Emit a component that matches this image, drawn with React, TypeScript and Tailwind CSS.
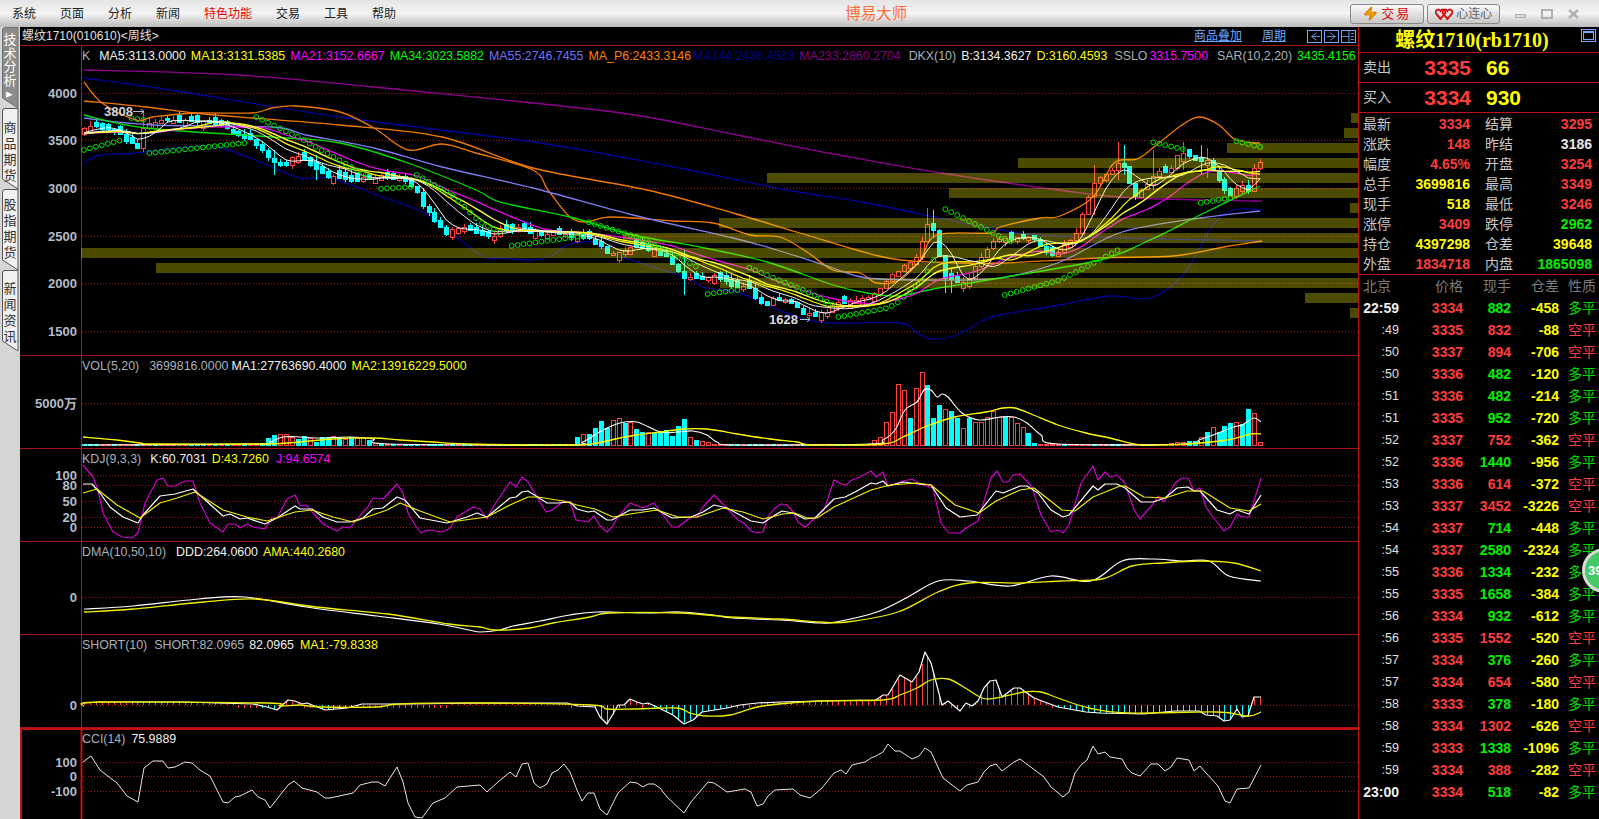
import React from "react";
import { Zap } from "lucide-react";

type Pt = [number, number];

const parse = (s: string): Pt[] =>
  s.trim().split(/\s+/).map((p) => {
    const [x, y] = p.split(",").map(Number);
    return [x, y] as Pt;
  });

const interp = (pts: Pt[], x: number) => {
  if (x <= pts[0][0]) return pts[0][1];
  for (let i = 1; i < pts.length; i++) {
    if (x <= pts[i][0]) {
      const [x0, y0] = pts[i - 1];
      const [x1, y1] = pts[i];
      return y0 + ((y1 - y0) * (x - x0)) / (x1 - x0);
    }
  }
  return pts[pts.length - 1][1];
};

// catmull-rom through the key points, for the slow moving averages
const smoothPath = (s: string) => {
  const p = parse(s);
  let d = `M${p[0][0]} ${p[0][1]}`;
  for (let i = 0; i < p.length - 1; i++) {
    const a = p[Math.max(i - 1, 0)];
    const b = p[i];
    const c = p[i + 1];
    const e = p[Math.min(i + 2, p.length - 1)];
    const c1x = b[0] + (c[0] - a[0]) / 6;
    const c1y = b[1] + (c[1] - a[1]) / 6;
    const c2x = c[0] - (e[0] - b[0]) / 6;
    const c2y = c[1] - (e[1] - b[1]) / 6;
    d += `C${c1x.toFixed(1)} ${c1y.toFixed(1)} ${c2x.toFixed(1)} ${c2y.toFixed(1)} ${c[0]} ${c[1]}`;
  }
  return d;
};

// pseudo random so the candles stay the same on every render
const rnd = (i: number) => {
  const v = Math.sin(i * 12.9898 + 4.1) * 43758.5453;
  return v - Math.floor(v);
};

const N = 199;
const xs = Array.from({ length: N }, (_, i) => 84 + 5.94 * i);

const PRICE = parse(`84,128 95,125 110,130 125,138 140,148 144,125 160,120 200,122 215,125 235,132 250,140 265,153 272,162 283,167 295,155 305,160 325,175 345,180 370,178 385,176 400,178 415,190 423,205 444,233 460,225 490,238 500,230 520,228 533,232 577,235 600,245 607,255 617,252 637,245 653,250 667,258 683,277 700,278 717,277 727,283 750,288 757,303 767,305 773,297 793,303 803,313 813,315 823,312 833,305 850,302 870,297 882,285 893,273 907,265 918,257 925,225 930,227 937,233 942,278 948,278 960,282 970,277 983,252 997,237 1005,240 1030,235 1050,255 1060,250 1075,235 1085,205 1092,187 1104,172 1110,173 1116,163 1122,162 1128,180 1134,197 1146,187 1152,177 1158,170 1164,173 1170,172 1176,158 1182,153 1194,162 1200,162 1206,160 1218,177 1224,190 1230,197 1236,190 1242,183 1248,192 1254,167 1260,160`);

const closes = xs.map((x, i) => interp(PRICE, x) + (rnd(i) - 0.5) * 4);

const movingAvg = (n: number) =>
  closes
    .map((_, i) => {
      let sum = 0;
      for (let k = i - n + 1; k <= i; k++) sum += k < 0 ? 134 : closes[k];
      return `${xs[i].toFixed(1)},${(sum / n).toFixed(1)}`;
    })
    .join(" ");

const longWicks: Record<number, [number, number]> = {
  144: [112, 152], 196: [114, 128], 272: [150, 175], 316: [155, 180],
  683: [250, 295], 925: [208, 240], 931: [210, 238], 943: [268, 293], 949: [268, 293],
  1092: [165, 215], 1116: [142, 180], 1122: [145, 175], 1152: [150, 190], 1182: [142, 170], 1200: [145, 175], 1206: [148, 178],
};

const MA233 = "84,70 238,75 374,87 533,103 635,115 737,135 839,155 941,173 1066,191 1134,198 1262,201";
const MA144 = "84,78 170,90 340,117 533,142 669,166 787,190 867,203 990,228 1060,236 1262,241";
const LOW_BAND = "84,163 100,155 136,153 187,147 218,147 260,162 300,178 330,178 377,195 428,215 480,255 500,258 533,260 553,255 567,245 593,242 610,253 685,277 703,287 740,293 767,305 800,318 833,323 900,323 917,333 933,339 957,335 980,322 1000,315 1060,305 1110,296 1150,298 1183,275 1213,225 1234,210 1262,210";
const MA_P6 = "84,101 146,107 194,113 252,118 340,125 442,137 533,168 647,190 733,213 800,233 883,257 933,262 1000,263 1100,258 1173,256 1224,247 1262,241";
const THIN_ORANGE = "84,82 102,103 136,120 153,117 194,113 252,113 272,108 296,106 340,112 374,128 408,150 442,144 476,153 533,170 548,190 570,217 587,222 610,217 673,221 713,223 750,235 780,237 807,252 833,270 860,273 877,283 900,280 920,260 937,235 990,233 1000,227 1040,218 1060,216 1093,197 1114,163 1137,159 1154,147 1182,125 1200,117 1219,125 1236,140 1260,143";
const MA55 = "84,118 153,125 272,127 306,135 374,148 442,167 533,188 633,215 733,238 777,250 833,268 867,278 933,280 1000,278 1060,262 1122,232 1200,218 1260,211";
const MA34 = "84,115 146,128 272,137 340,143 408,163 476,190 500,202 570,217 633,235 700,247 767,262 833,285 867,293 900,296 933,289 1000,278 1100,260 1150,240 1200,215 1260,186";

const SAR_SEGS = [
  "84,150 122,140", "130,118 144,120", "150,153 245,143", "252,115 300,138 360,172 372,178", "378,189 410,187",
  "415,174 452,195 480,222 500,232", "510,246 582,236", "588,222 640,238 697,267", "708,294 738,290",
  "745,266 810,293 833,305", "839,317 888,308 897,303 913,289 925,278 930,265 937,255", "943,208 1003,238 1015,243",
  "1005,295 1060,280 1090,265 1118,250", "1152,142 1182,149", "1200,203 1230,198", "1236,141 1260,147",
].map(parse);

const BANDS: [number, number][] = [
  [113, 1351], [128, 1344], [143, 1227], [158, 1018], [173, 767], [188, 949], [203, 1350], [218, 719],
  [233, 623], [248, 81], [263, 156], [278, 720], [293, 1305], [308, 1350],
];

type VolBar = [number, number, "c" | "r"];
const VOL: VolBar[] = [
  [265, 443, "c"], [271, 438, "c"], [277, 435, "c"], [283, 434, "r"], [289, 437, "r"], [295, 439, "c"], [301, 436, "c"], [307, 438, "r"], [313, 442, "c"], [319, 437, "c"], [325, 437, "c"], [331, 436, "r"], [337, 437, "c"], [343, 439, "r"], [349, 437, "c"], [355, 438, "r"], [361, 438, "r"], [367, 440, "c"], [373, 443, "r"], [379, 444, "c"],
  [577, 437, "c"], [583, 434, "r"], [589, 434, "c"], [595, 428, "c"], [601, 421, "c"], [607, 428, "c"], [613, 420, "r"], [619, 418, "r"], [625, 423, "c"], [631, 422, "r"], [637, 429, "c"], [643, 432, "c"], [649, 432, "r"], [655, 433, "c"], [661, 432, "c"], [667, 430, "c"], [673, 436, "c"], [679, 426, "c"], [685, 419, "c"], [691, 437, "r"], [697, 440, "c"], [703, 441, "r"], [709, 442, "r"], [715, 444, "r"],
  [876, 440, "r"], [882, 437, "r"], [888, 422, "r"], [894, 412, "r"], [900, 384, "r"], [906, 390, "r"], [912, 418, "c"], [918, 388, "r"], [924, 372, "r"], [930, 385, "c"], [936, 418, "c"], [942, 405, "c"], [948, 409, "r"], [954, 411, "c"], [960, 418, "c"], [966, 428, "r"], [972, 418, "c"], [978, 422, "r"], [984, 417, "r"], [990, 411, "r"], [996, 417, "r"], [1002, 417, "c"], [1008, 417, "r"], [1014, 423, "r"], [1020, 427, "r"], [1026, 433, "c"], [1032, 443, "c"],
  [1170, 443, "r"], [1176, 442, "r"], [1182, 442, "r"], [1188, 441, "c"], [1194, 441, "c"], [1200, 437, "r"], [1206, 432, "c"], [1212, 427, "r"], [1218, 432, "c"], [1224, 426, "c"], [1230, 423, "c"], [1236, 422, "r"], [1242, 424, "c"], [1248, 409, "c"], [1254, 413, "r"], [1260, 442, "r"],
];

const VOL_W = "84,445 257,444 270,442 283,437 300,437 320,438 350,437 373,439 390,444 570,445 583,442 603,430 620,423 637,422 660,432 677,432 693,431 707,435 717,442 737,445 869,444 883,440 895,430 905,410 917,402 924,390 931,390 937,397 942,394 948,397 962,413 979,420 1000,417 1014,417 1027,423 1041,435 1058,444 1186,444 1199,440 1213,435 1234,427 1242,425 1254,418 1261,422";
const VOL_Y = "83,437 117,440 140,443 157,444 260,444 287,443 333,439 373,438 400,440 433,442 467,444 573,445 597,443 620,438 637,435 660,432 683,429 707,429 737,434 770,439 797,442 813,445 883,444 903,437 927,426 955,417 986,412 1003,408 1015,408 1031,414 1058,425 1086,433 1110,438 1141,445 1186,444 1227,440 1251,434 1261,434";

const KDJ_J = "83,465 93,477 98,490 103,513 113,532 122,537 132,538 138,533 145,503 157,480 163,478 168,486 175,486 185,481 193,481 200,503 210,523 223,532 228,524 235,524 240,528 247,524 253,527 265,529 272,518 277,518 287,499 295,495 300,506 306,505 315,515 323,524 337,531 343,527 350,528 362,513 367,508 373,498 383,499 397,484 403,493 408,513 415,525 421,533 427,530 443,532 450,528 457,517 473,507 480,509 487,519 493,507 510,482 516,487 522,477 528,482 546,512 552,510 564,501 570,502 576,520 588,522 594,516 600,526 607,532 612,527 618,517 630,503 643,508 654,503 672,527 678,527 691,517 697,517 703,507 714,495 727,508 738,520 745,524 751,531 757,533 763,532 768,517 775,508 781,504 787,505 793,512 798,522 805,527 815,518 824,510 834,480 841,484 846,485 852,480 860,477 871,471 876,477 883,472 888,486 900,482 912,479 920,484 933,488 941,523 949,533 960,533 966,528 978,521 991,478 997,471 1003,482 1008,482 1013,475 1020,474 1032,487 1041,515 1051,532 1058,530 1063,533 1069,525 1081,483 1093,466 1098,480 1105,472 1110,477 1117,475 1125,483 1134,510 1140,519 1153,504 1158,496 1164,502 1175,483 1182,478 1188,478 1194,491 1200,488 1206,507 1213,517 1224,531 1230,527 1237,514 1242,517 1249,517 1261,478";
const KDJ_K = "83,484 92,484 100,493 110,507 123,517 138,523 143,515 160,496 175,494 193,489 213,507 223,516 230,514 240,519 247,518 265,524 277,518 295,506 300,509 312,509 323,517 337,522 350,522 363,518 373,509 383,508 397,497 405,500 420,518 447,523 467,517 477,513 487,517 510,498 516,497 522,492 528,491 547,503 558,503 570,502 577,509 588,512 594,511 607,520 612,520 630,510 643,510 654,508 672,518 691,517 703,512 714,505 727,508 751,521 763,523 775,515 782,511 793,513 805,519 815,518 834,499 845,497 855,492 871,483 876,484 883,481 888,486 903,482 919,484 931,485 946,508 960,517 977,515 996,491 1003,493 1020,486 1027,486 1038,493 1051,510 1063,517 1069,515 1093,486 1098,490 1105,484 1117,484 1125,488 1141,502 1153,502 1165,498 1177,488 1188,487 1194,491 1200,491 1217,510 1230,514 1237,510 1249,514 1261,495";
const KDJ_D = "83,493 97,489 117,505 140,518 160,503 177,498 195,492 223,510 247,517 267,521 295,512 312,510 333,517 353,522 387,510 400,503 420,511 450,522 487,517 510,505 528,497 538,497 563,501 577,505 595,509 613,517 630,514 657,510 678,517 697,517 723,508 743,512 763,519 783,514 795,513 807,518 817,518 834,507 871,490 890,485 917,483 931,485 955,505 979,513 996,501 1020,490 1034,488 1062,510 1075,511 1093,497 1120,486 1125,486 1144,497 1165,498 1187,491 1203,491 1230,508 1249,511 1261,504";

const DMA_W = "84,609 133,606 199,599 245,597 306,607 377,616 439,624 469,630 480,632 500,630 513,626 540,621 570,615 597,612 647,613 680,612 713,615 733,618 780,620 820,623 836,622 877,612 908,597 938,581 969,581 1010,586 1051,576 1091,581 1122,561 1153,559 1183,561 1209,561 1229,576 1261,581";
const DMA_Y = "84,612 133,609 204,602 255,599 316,607 388,614 449,624 480,627 495,630 530,628 553,623 590,617 610,613 680,613 730,617 780,619 820,622 847,622 898,612 938,592 969,583 1020,583 1061,581 1102,579 1132,566 1163,563 1199,561 1234,563 1261,571";

const SHORT_W = "83,703 100,702 183,702 253,704 267,707 277,710 288,700 295,701 302,704 307,703 325,710 347,708 362,704 413,704 480,703 567,703 577,706 595,707 600,717 607,724 613,714 618,705 624,705 630,699 637,702 643,704 648,703 657,707 673,715 684,724 693,720 702,712 727,708 740,705 757,703 780,702 820,701 876,700 883,695 888,695 900,675 912,682 919,672 925,652 931,663 936,682 942,705 948,701 960,711 966,703 972,706 978,701 984,688 990,681 996,680 1002,697 1014,688 1020,688 1034,698 1058,707 1086,712 1100,713 1144,714 1175,711 1199,711 1206,715 1217,716 1224,721 1230,720 1237,709 1242,717 1248,716 1254,697 1261,697";
const SHORT_Y = "83,706 100,702 267,703 280,706 300,705 320,707 377,707 400,704 480,703 590,705 607,709 633,709 677,708 690,713 707,716 730,715 763,706 820,701 883,700 900,695 917,688 931,680 948,679 962,686 982,698 996,698 1024,692 1041,692 1058,698 1089,708 1127,713 1217,712 1248,716 1261,712";

const CCI = "83,762 91,756 100,770 117,783 127,796 138,802 144,768 153,761 163,761 168,768 175,767 185,762 192,763 200,770 210,776 223,802 228,803 235,797 240,796 252,790 258,797 265,800 270,808 288,785 294,781 302,788 317,792 325,798 330,798 353,793 360,785 372,782 378,782 385,786 390,778 397,767 403,782 408,803 415,817 422,818 433,803 445,798 457,787 480,785 487,792 498,782 510,772 516,777 522,764 528,763 534,783 540,788 547,784 552,773 558,770 564,764 570,772 577,790 582,801 588,793 594,793 600,809 607,815 618,793 630,782 637,783 643,787 648,784 654,784 660,788 667,797 684,813 691,802 708,782 714,783 720,787 727,792 745,789 751,792 757,806 763,804 768,796 775,790 793,789 800,795 810,798 822,788 834,773 841,770 846,774 852,765 865,762 871,758 876,756 883,752 888,744 895,751 900,751 912,759 919,756 925,748 931,752 943,778 960,791 967,785 978,782 984,772 990,766 996,764 1002,771 1014,762 1020,759 1032,768 1044,777 1051,787 1063,797 1069,792 1075,773 1081,765 1087,760 1093,746 1098,754 1105,752 1110,757 1122,759 1127,768 1132,773 1140,776 1151,764 1158,764 1165,771 1171,767 1177,758 1189,760 1194,771 1200,766 1206,773 1218,786 1225,801 1230,803 1237,789 1249,788 1261,765";

const RED_GRID = "#a81414";

const Line = ({ pts, c, w = 1.2 }: { pts: string; c: string; w?: number }) => (
  <polyline points={pts} fill="none" stroke={c} strokeWidth={w} strokeLinejoin="round" />
);

const Curve = ({ pts, c, w = 1.3 }: { pts: string; c: string; w?: number }) => (
  <path d={smoothPath(pts)} fill="none" stroke={c} strokeWidth={w} strokeLinejoin="round" />
);

const Grid = ({ ys }: { ys: number[] }) => (
  <>
    {ys.map((y) => (
      <line key={y} x1={82} x2={1358} y1={y + 0.5} y2={y + 0.5} stroke={RED_GRID} strokeDasharray="1 2" />
    ))}
  </>
);

const AxisLabels = ({ items }: { items: [string, number][] }) => (
  <>
    {items.map(([t, y]) => (
      <text key={t} x={77} y={y + 5} textAnchor="end" fill="#b4bcc8" fontSize={13} fontWeight={700}>
        {t}
      </text>
    ))}
  </>
);

type Legend = [string, string][];

const GRAY = "text-[#a8b2bc]";
const WHITE = "text-[#f0f0f0]";
const YEL = "text-[#ffff00]";
const MAG = "text-[#ff00ff]";
const GRN = "text-[#00ff00]";

function Pane({
  top,
  height,
  legend,
  active,
  children,
}: {
  top: number;
  height: number;
  legend: Legend;
  active?: boolean;
  children: React.ReactNode;
}) {
  return (
    <div className={active ? "relative border-l-2 border-t-2 border-[#c01010]" : "relative border-b border-[#a81414]"}>
      <svg width={1338} height={height} viewBox={`${active ? 22 : 20} ${top} 1338 ${height}`} className="block">
        <line x1={81.5} x2={81.5} y1={top} y2={top + height} stroke="#c01010" strokeWidth={active ? 2 : 1} />
        {children}
      </svg>
      <div
        className={`absolute flex gap-[5px] text-[12.4px] leading-[18px] whitespace-nowrap ${active ? "top-0 left-[60px]" : "top-[1px] left-[62px]"}`}
      >
        {legend.map(([t, c]) => (
          <span key={t} className={c}>
            {t}
          </span>
        ))}
      </div>
    </div>
  );
}

function Candles() {
  return (
    <g shapeRendering="crispEdges">
      {xs.map((x, i) => {
        const close = closes[i];
        const prev = i === 0 ? close + 3 : closes[i - 1];
        const up = prev > close;
        const body = Math.max(Math.abs(prev - close), 2 + rnd(i + 300) * 6);
        const top = up ? close : close - body;
        const bottom = up ? close + body : close;
        const cx = Math.round(x);
        const lw = Object.entries(longWicks).find(([k]) => Math.abs(Number(k) - x) < 3);
        const wTop = lw ? lw[1][0] : top - rnd(i + 50) * 5;
        const wBot = lw ? lw[1][1] : bottom + rnd(i + 90) * 4;
        const col = up ? "#ff4040" : "#00ffff";
        return (
          <g key={i}>
            <line x1={cx + 0.5} x2={cx + 0.5} y1={wTop} y2={wBot} stroke={col} />
            {up ? (
              <rect x={cx - 2 + 0.5} y={Math.round(top) + 0.5} width={4} height={Math.round(bottom - top)} fill="#000" stroke={col} />
            ) : (
              <rect x={cx - 2} y={Math.round(top)} width={5} height={Math.round(bottom - top) + 1} fill={col} />
            )}
          </g>
        );
      })}
    </g>
  );
}

function SarDots() {
  return (
    <g>
      {SAR_SEGS.flatMap((seg, s) =>
        xs
          .filter((x) => x >= seg[0][0] - 1 && x <= seg[seg.length - 1][0] + 1)
          .map((x) => <circle key={`${s}-${x}`} cx={x} cy={interp(seg, x)} r={2.4} fill="none" stroke="#00e800" />),
      )}
    </g>
  );
}

function VolumeBars() {
  const bars = xs.map((x, i) => {
    const hit = VOL.find((v) => Math.abs(v[0] - x) < 3);
    return hit ? { x, top: hit[1], kind: hit[2] } : { x, top: 444, kind: rnd(i + 7) > 0.5 ? ("c" as const) : ("r" as const) };
  });
  return (
    <g shapeRendering="crispEdges">
      {bars.map((b, i) => {
        const cx = Math.round(b.x);
        return b.kind === "c" ? (
          <rect key={i} x={cx - 2} y={b.top} width={5} height={446 - b.top} fill="#00ffff" />
        ) : (
          <rect key={i} x={cx - 2 + 0.5} y={b.top + 0.5} width={4} height={445 - b.top} fill="#000" stroke="#ff4040" />
        );
      })}
    </g>
  );
}

function ShortSticks() {
  const white = parse(SHORT_W);
  return (
    <g shapeRendering="crispEdges">
      {xs.map((x, i) => {
        const y = interp(white, x);
        const cx = Math.round(x) + 0.5;
        return <line key={i} x1={cx} x2={cx} y1={705} y2={y < 703.5 ? y : y > 706 ? y : 708} stroke={y < 705 ? "#ff4040" : "#00ffff"} />;
      })}
    </g>
  );
}

const MA_5 = movingAvg(5);
const MA_10 = movingAvg(10);
const MA_13 = movingAvg(13);
const MA_21 = movingAvg(21);
const MA_16 = movingAvg(16);

function Charts() {
  return (
    <div className="flex flex-col bg-black">
      <Pane
        top={46}
        height={309}
        legend={[
          [`K`, `${GRAY} mr-[4px]`],
          ["MA5:3113.0000", WHITE],
          ["MA13:3131.5385", YEL],
          ["MA21:3152.6667", MAG],
          ["MA34:3023.5882", GRN],
          ["MA55:2746.7455", "text-[#7070ff]"],
          ["MA_P6:2433.3146", "text-[#ff8000]"],
          ["MA144:2436.4583", "text-[#000090] ml-[-3px]"],
          ["MA233:2860.2704", "text-[#800080]"],
          ["DKX(10)", `${GRAY} ml-[3px]`],
          ["B:3134.3627", WHITE],
          ["D:3160.4593", YEL],
          ["SSLO", `${GRAY} ml-[2px]`],
          ["3315.7500", `${MAG} ml-[-3px]`],
          ["SAR(10,2,20)", `${GRAY} ml-[4px]`],
          ["3435.4156", GRN],
        ]}
      >
        <Grid ys={[93, 140, 188, 236, 283, 331]} />
        <AxisLabels items={[["4000", 93], ["3500", 140], ["3000", 188], ["2500", 236], ["2000", 283], ["1500", 331]]} />
        <Curve pts={MA233} c="#900090" />
        <Curve pts={MA144} c="#000098" />
        <Curve pts={LOW_BAND} c="#000098" />
        <Candles />
        <Curve pts={MA_P6} c="#f07800" />
        <Curve pts={THIN_ORANGE} c="#f07800" />
        <Curve pts={MA55} c="#7c7cf0" />
        <Curve pts={MA34} c="#00e000" />
        <Line pts={MA_21} c="#ff00ff" />
        <Line pts={MA_16} c="#ffff40" w={1.4} />
        <Line pts={MA_13} c="#ffff00" />
        <Line pts={MA_10} c="#f0f0f0" w={1} />
        <Line pts={MA_5} c="#ffffff" w={1} />
        <SarDots />
        {BANDS.map(([y, x]) => (
          <rect key={y} x={x} y={y} width={1358 - x} height={10} fill="#fff700" fillOpacity={0.3} />
        ))}
        <text x={104} y={116} fill="#d0d4dc" fontSize={13} fontWeight={700}>
          3808
        </text>
        <path d="M133 111.5h11M141 109l3 2.5-3 2.5" stroke="#b4bcc8" fill="none" />
        <text x={769} y={324} fill="#d8dce4" fontSize={13} fontWeight={700}>
          1628
        </text>
        <path d="M800 319.5h10M807 317l3 2.5-3 2.5" stroke="#b4bcc8" fill="none" />
      </Pane>

      <Pane
        top={356}
        height={92}
        legend={[
          ["VOL(5,20)", `${GRAY} mr-[5px]`],
          ["3699816.0000", `${GRAY} mr-[-2px]`],
          ["MA1:27763690.4000", WHITE],
          ["MA2:13916229.5000", YEL],
        ]}
      >
        <Grid ys={[403]} />
        <AxisLabels items={[["5000万", 403]]} />
        <VolumeBars />
        <Curve pts={VOL_W} c="#ffffff" w={1.1} />
        <Curve pts={VOL_Y} c="#ffff00" />
      </Pane>

      <Pane
        top={449}
        height={92}
        legend={[
          ["KDJ(9,3,3)", `${GRAY} mr-[4px]`],
          ["K:60.7031", WHITE],
          ["D:43.7260", `${YEL} mr-[2px]`],
          ["J:94.6574", MAG],
        ]}
      >
        <Grid ys={[475, 485, 501, 517, 527]} />
        <AxisLabels items={[["100", 475], ["80", 485], ["50", 501], ["20", 517], ["0", 527]]} />
        <Line pts={KDJ_J} c="#d000d0" />
        <Line pts={KDJ_K} c="#ffffff" />
        <Line pts={KDJ_D} c="#f0f000" />
      </Pane>

      <Pane
        top={542}
        height={92}
        legend={[
          ["DMA(10,50,10)", `${GRAY} mr-[5px]`],
          ["DDD:264.0600", WHITE],
          ["AMA:440.2680", YEL],
        ]}
      >
        <Grid ys={[597]} />
        <AxisLabels items={[["0", 597]]} />
        <Curve pts={DMA_W} c="#ffffff" w={1.2} />
        <Curve pts={DMA_Y} c="#f0f000" />
      </Pane>

      <Pane
        top={635}
        height={92}
        legend={[
          ["SHORT(10)", `${GRAY} mr-[2px]`],
          ["SHORT:82.0965", GRAY],
          ["82.0965", `${WHITE} mr-[1px]`],
          ["MA1:-79.8338", YEL],
        ]}
      >
        <Grid ys={[705]} />
        <AxisLabels items={[["0", 705]]} />
        <ShortSticks />
        <Line pts={SHORT_W} c="#ffffff" />
        <Curve pts={SHORT_Y} c="#f0f000" />
      </Pane>

      <Pane
        active
        top={730}
        height={89}
        legend={[
          ["CCI(14)", `${GRAY} mr-[1px]`],
          ["75.9889", WHITE],
        ]}
      >
        <Grid ys={[762, 776, 791]} />
        <AxisLabels items={[["100", 762], ["0", 776], ["-100", 791]]} />
        <Line pts={CCI} c="#e8e8e8" w={1} />
      </Pane>
    </div>
  );
}

const STATS: [string, string, string, string, string, string][] = [
  ["最新", "3334", "r", "结算", "3295", "r"],
  ["涨跌", "148", "r", "昨结", "3186", "w"],
  ["幅度", "4.65%", "r", "开盘", "3254", "r"],
  ["总手", "3699816", "y", "最高", "3349", "r"],
  ["现手", "518", "y", "最低", "3246", "r"],
  ["涨停", "3409", "r", "跌停", "2962", "g"],
  ["持仓", "4397298", "y", "仓差", "39648", "y"],
  ["外盘", "1834718", "r", "内盘", "1865098", "g"],
];

const COLOR: Record<string, string> = {
  r: "text-[#ff3c3c]",
  y: "text-[#ffff00]",
  g: "text-[#00f000]",
  w: "text-[#e8e8e8]",
};

const TICKS: [string, string, string, "g" | "r", string][] = [
  ["22:59", "3334", "882", "g", "-458"],
  [":49", "3335", "832", "r", "-88"],
  [":50", "3337", "894", "r", "-706"],
  [":50", "3336", "482", "g", "-120"],
  [":51", "3336", "482", "g", "-214"],
  [":51", "3335", "952", "g", "-720"],
  [":52", "3337", "752", "r", "-362"],
  [":52", "3336", "1440", "g", "-956"],
  [":53", "3336", "614", "r", "-372"],
  [":53", "3337", "3452", "r", "-3226"],
  [":54", "3337", "714", "g", "-448"],
  [":54", "3337", "2580", "g", "-2324"],
  [":55", "3336", "1334", "g", "-232"],
  [":55", "3335", "1658", "g", "-384"],
  [":56", "3334", "932", "g", "-612"],
  [":56", "3335", "1552", "r", "-520"],
  [":57", "3334", "376", "g", "-260"],
  [":57", "3334", "654", "r", "-580"],
  [":58", "3333", "378", "g", "-180"],
  [":58", "3334", "1302", "r", "-626"],
  [":59", "3333", "1338", "g", "-1096"],
  [":59", "3334", "388", "r", "-282"],
  ["23:00", "3334", "518", "g", "-82"],
];

const ROW_COLS = "grid grid-cols-[39px_64px_48px_48px_1fr] items-center h-[22px] pl-[1px]";

function QuotePanel() {
  return (
    <div className="relative w-[241px] h-[792px] overflow-hidden border-l border-[#c01010] bg-black text-[14px] text-[#c8c8c8]">
      <div className="relative flex h-[26px] items-center justify-center border-b border-[#c01010] pr-[14px] font-['Liberation_Serif','Noto_Sans_CJK_SC',serif] text-[20px] font-bold text-[#ffff00]">
        螺纹1710(rb1710)
        <div className="absolute right-[3px] top-[2px] flex h-[13px] w-[15px] items-center justify-center border border-[#6fa8ff]">
          <div className="h-[9px] w-[11px] border-t-2 border-r border-b border-l border-[#6fa8ff]" />
        </div>
      </div>
      {[
        ["卖出", "3335", "66"],
        ["买入", "3334", "930"],
      ].map(([label, price, vol]) => (
        <div key={label} className="flex h-[30px] items-center border-b border-[#c01010] pl-[4px]">
          <span className="w-[61px]">{label}</span>
          <span className="w-[47px] text-right text-[21px] font-bold text-[#ff3c3c]">{price}</span>
          <span className="ml-[15px] text-[21px] font-bold text-[#ffff00]">{vol}</span>
        </div>
      ))}
      <div className="border-b border-[#c01010] pt-[1px]">
        {STATS.map(([l1, v1, c1, l2, v2, c2]) => (
          <div key={l1} className="grid h-[20px] grid-cols-[107px_122px] items-center pl-[4px]">
            <div className="flex justify-between">
              <span>{l1}</span>
              <span className={`font-bold ${COLOR[c1]}`}>{v1}</span>
            </div>
            <div className="ml-[15px] flex justify-between">
              <span>{l2}</span>
              <span className={`font-bold ${COLOR[c2]}`}>{v2}</span>
            </div>
          </div>
        ))}
      </div>
      <div className={`${ROW_COLS} text-[#7c7c7c]`}>
        <span className="pl-[3px]">北京</span>
        <span className="text-right">价格</span>
        <span className="text-right">现手</span>
        <span className="text-right">仓差</span>
        <span className="pl-[9px]">性质</span>
      </div>
      {TICKS.map((t, i) => (
        <div key={i} className={ROW_COLS}>
          {t[0].startsWith(":") ? (
            <span className="text-right text-[12.5px] text-[#e0e0e0]">{t[0]}</span>
          ) : (
            <span className="text-right font-bold text-[#f0f0f0]">{t[0]}</span>
          )}
          <span className="text-right font-bold text-[#ff3c3c]">{t[1]}</span>
          <span className={`text-right font-bold ${COLOR[t[3]]}`}>{t[2]}</span>
          <span className="text-right font-bold text-[#ffff00]">{t[4]}</span>
          <span className={`pl-[9px] ${t[3] === "g" ? "text-[#00e000]" : "text-[#ff3c3c]"}`}>{t[3] === "g" ? "多平" : "空平"}</span>
        </div>
      ))}
      <div className="absolute top-[521px] right-[-28px] flex h-[45px] w-[45px] items-center rounded-full border-[3px] border-[#d4dcd4] bg-[#46c864] pl-[3px] text-[13px] font-bold text-white">
        39
      </div>
    </div>
  );
}

const MENU = ["系统", "页面", "分析", "新闻", "特色功能", "交易", "工具", "帮助"];

function TopBar() {
  return (
    <div className="flex h-[27px] items-center bg-gradient-to-b from-[#e4e4e4] via-[#f4f4f4] to-[#bcbcbc] pl-3 text-[12px] text-[#222]">
      <div className="flex gap-6">
        {MENU.map((m) => (
          <span key={m} className={m === "特色功能" ? "text-[#f00000]" : ""}>
            {m}
          </span>
        ))}
      </div>
      <span className="ml-[449px] text-[15.5px] text-[#ff6a3c]">博易大师</span>
      <button className="ml-[443px] flex h-[20px] w-[74px] items-center justify-center gap-[3px] rounded-[3px] border border-[#888] bg-gradient-to-b from-[#fafafa] to-[#c8c8c8] text-[13px] tracking-[2px] text-[#e00000]">
        <Zap size={15} className="text-[#e08000]" fill="#f0a000" />
        交易
      </button>
      <button className="ml-[3px] flex h-[20px] w-[73px] items-center justify-center gap-[3px] rounded-[3px] border border-[#888] bg-gradient-to-b from-[#fafafa] to-[#c8c8c8] text-[12px] text-[#666]">
        <svg width="18" height="14" viewBox="0 0 18 14">
          <path d="M5.5 12 1 6.5C-.5 3.5 3.5 1 5.5 4 7.5 1 11.5 3.5 10 6.5Z" fill="none" stroke="#d01818" strokeWidth="2" />
          <path d="M12.5 12 8 6.5C6.5 3.5 10.5 1 12.5 4 14.5 1 18.5 3.5 17 6.5Z" fill="none" stroke="#d01818" strokeWidth="2" />
        </svg>
        心连心
      </button>
      <div className="ml-[15px] flex items-center gap-[15px] text-[#aaa]">
        <span className="mt-[4px] h-[4px] w-[11px] border border-[#b0b0b0] bg-[#dcdcdc]" />
        <span className="h-[10px] w-[12px] border-2 border-[#b0b0b0]" />
        <svg width="11" height="10" viewBox="0 0 11 10">
          <path d="M1 1l9 8M10 1 1 9" stroke="#b0b0b0" strokeWidth="2.4" />
        </svg>
      </div>
    </div>
  );
}

function RailTab({ label, active, h, textClass }: { label: string; active?: boolean; h: number; textClass: string }) {
  return (
    <div className={`relative flex w-[20px] justify-center ${active ? "text-white" : "text-[#333]"}`} style={{ height: h }}>
      <svg width="20" height={h} viewBox={`0 0 20 ${h}`} className="absolute inset-0">
        <path
          d={`M2.5 ${h - 10}V3Q2.5 .5 5 .5H18V${h}Z`}
          fill={active ? "#8c8c8c" : "#f0f0f0"}
          stroke={active ? "#707070" : "#555"}
        />
      </svg>
      <div className={`relative text-center text-[13px] ${textClass}`}>
        {label.split("").map((c) => (
          <div key={c}>{c}</div>
        ))}
      </div>
    </div>
  );
}

function LeftRail() {
  return (
    <div className="w-[20px] bg-[#d6d6d6]">
      <RailTab label="技术分析▸" active h={81} textClass="pt-[6px] leading-[13.5px]" />
      <RailTab label="商品期货" h={81} textClass="pt-[12px] leading-[16px]" />
      <RailTab label="股指期货" h={81} textClass="pt-[8px] leading-[16px]" />
      <RailTab label="新闻资讯" h={81} textClass="pt-[11px] leading-[16px]" />
    </div>
  );
}

function ChartHeader() {
  return (
    <div className="flex h-[19px] items-center border-b border-[#a81414] bg-black pr-[2px] pl-[2px] text-[12px] text-[#e0e0e0]">
      <span>螺纹1710(010610)&lt;周线&gt;</span>
      <span className="ml-auto text-[#6fa8ff] underline">商品叠加</span>
      <span className="ml-[20px] text-[#6fa8ff] underline">周期</span>
      <div className="ml-[21px] flex gap-[2px]">
        {["M10 2 4 6.5 10 11M4 6.5H14", "M6 2l6 4.5L6 11M12 6.5H2", "M8 0v13M0 6.5h8M10 3h4M10 6.5h4M10 10h4"].map((d) => (
          <svg key={d} width="15" height="13" viewBox="0 0 15 13" className="border border-[#6fa8ff]">
            <path d={d} fill="none" stroke="#6fa8ff" />
          </svg>
        ))}
      </div>
    </div>
  );
}

export default function App() {
  return (
    <div className="h-[819px] w-[1599px] overflow-hidden bg-black font-['Liberation_Sans','Noto_Sans_CJK_SC',sans-serif]">
      <TopBar />
      <div className="flex">
        <LeftRail />
        <div className="w-[1338px]">
          <ChartHeader />
          <Charts />
        </div>
        <QuotePanel />
      </div>
    </div>
  );
}
